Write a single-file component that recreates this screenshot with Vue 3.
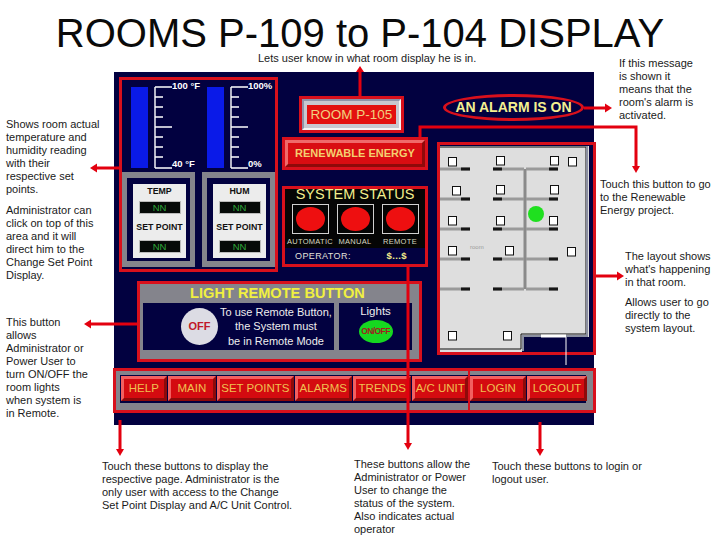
<template>
  <div class="page">
    <h1 class="title">ROOMS P-109 to P-104 DISPLAY</h1>

    <div class="panel">
      <section class="box gauges">
        <div class="meters">
          <div class="meter" v-for="m in meters" :key="m.name">
            <div class="bar"></div>
            <svg class="scale" width="24" height="83" viewBox="0 0 24 83">
              <path d="M1 1V82M1 1H18M1 82H18M1 11H9M1 21H9M1 31H9M1 41H18M1 51H9M1 61H9M1 71H9" stroke="#fff" stroke-width="1.4" fill="none" />
            </svg>
            <div class="marks">
              <span>{{ m.top }}</span>
              <span>{{ m.bottom }}</span>
            </div>
          </div>
        </div>
        <div class="readouts">
          <div class="readout" v-for="m in meters" :key="m.name">
            <div class="card">
              <span>{{ m.name }}</span>
              <b>NN</b>
              <span>SET POINT</span>
              <b>NN</b>
            </div>
          </div>
        </div>
      </section>

      <div class="middle">
        <div class="box room"><div class="room-face"><span>ROOM P-105</span></div></div>
        <div class="box renew"><div class="renew-face">RENEWABLE ENERGY</div></div>
        <section class="box status">
          <div class="status-top">
            <div class="status-title">SYSTEM STATUS</div>
            <div class="lamps">
              <div class="lamp" v-for="s in modes" :key="s">
                <div class="lamp-frame"><i></i></div>
                <span>{{ s }}</span>
              </div>
            </div>
          </div>
          <div class="operator"><span>OPERATOR:</span><b>$...$</b></div>
        </section>
      </div>

      <div class="side">
        <div class="alarm">AN ALARM IS ON</div>
        <div class="box plan">
          <svg width="153" height="222" viewBox="440 146 153 222">
            <path d="M439 147H589V338H522V353H439Z" fill="#dedede" />
            <path d="M439 148H586V335H521V350H439" fill="none" stroke="#111" stroke-width="1" />
            <path d="M587 147V337H523V352" fill="none" stroke="#8b8fa0" stroke-width="2" />
            <path d="M541 337H566" stroke="#fff" stroke-width="3" />
            <path d="M566 338V366" stroke="#fff" stroke-width="1" />
            <path d="M525 170V290" stroke="#8a8a8a" stroke-width="3" />
            <g v-for="y in wallRows" :key="y">
              <path :d="`M440 ${y}H470M493 ${y}H524M526 ${y}H558`" stroke="#9a9a9a" stroke-width="3" />
              <path :d="`M461 ${y}H470M493 ${y}H502M549 ${y}H558`" stroke="#161616" stroke-width="3" />
            </g>
            <rect v-for="s in squares" :key="s.join()" :x="s[0] + 0.5" :y="s[1] + 0.5" width="8" height="8.5" fill="#fff" stroke="#111" />
            <circle cx="536" cy="215" r="8" fill="#1fe01f" />
            <text x="470" y="250" class="plan-label">room</text>
          </svg>
        </div>
      </div>

      <section class="box light">
        <div class="light-title">LIGHT REMOTE BUTTON</div>
        <div class="light-row">
          <div class="light-msg">
            <div class="off-button">OFF</div>
            <p>To use Remote Button,<br />the System must<br />be in Remote Mode</p>
          </div>
          <div class="light-state">
            <span>Lights</span>
            <div class="on-off">ON/OFF</div>
          </div>
        </div>
      </section>

      <nav class="nav">
        <div class="box nav-group">
          <button v-for="b in mainButtons" :key="b.label" :style="{ width: b.w + 'px' }">{{ b.label }}</button>
        </div>
        <div class="box nav-group login">
          <button v-for="b in userButtons" :key="b.label" :style="{ width: b.w + 'px' }">{{ b.label }}</button>
        </div>
      </nav>
    </div>

    <svg class="arrows" width="720" height="540" viewBox="0 0 720 540">
      <g fill="none" stroke="#e3000f" stroke-width="3">
        <path d="M360 96V70" />
        <path d="M584 108H606" />
        <path d="M420 137V127H636V168" />
        <path d="M408 267V444" />
        <path d="M119 168H95" />
        <path d="M137 324H89" />
        <path d="M120 420V449" />
        <path d="M540 422V449" />
        <path d="M596 276H618" />
      </g>
      <g fill="#e3000f">
        <path d="M360 66L356 72H364Z" />
        <path d="M612 108L605 103.5V112.5Z" />
        <path d="M636 173L632 166H640Z" />
        <path d="M408 450L404 443H412Z" />
        <path d="M90 168L97 163.5V172.5Z" />
        <path d="M84 324L91 319.5V328.5Z" />
        <path d="M120 456L116 449H124Z" />
        <path d="M540 456L536 449H544Z" />
        <path d="M624 276L617 271.5V280.5Z" />
      </g>
    </svg>

    <p
      v-for="n in notes"
      :key="n.text"
      class="note"
      :style="{ left: n.x + 'px', top: n.y + 'px' }"
      v-html="n.text"
    ></p>
  </div>
</template>

<script setup>
const meters = [
  { name: "TEMP", top: "100 °F", bottom: "40 °F" },
  { name: "HUM", top: "100%", bottom: "0%" },
]

const modes = ["AUTOMATIC", "MANUAL", "REMOTE"]

const wallRows = [170, 200, 230, 260, 290]

const squares = [
  [448, 158], [496, 157], [550, 157], [568, 158],
  [452, 187], [496, 186], [550, 186],
  [448, 217], [496, 217], [549, 217],
  [448, 247], [505, 247], [567, 248],
  [448, 332], [503, 332],
]

const mainButtons = [
  { label: "HELP", w: 46 },
  { label: "MAIN", w: 49 },
  { label: "SET POINTS", w: 77 },
  { label: "ALARMS", w: 58 },
  { label: "TRENDS", w: 59 },
  { label: "A/C UNIT", w: 56 },
]

const userButtons = [
  { label: "LOGIN", w: 56 },
  { label: "LOGOUT", w: 60 },
]

const notes = [
  { x: 258, y: 52, text: "Lets user know in what room display he is in." },
  { x: 619, y: 57, text: "If this message<br>is shown it<br>means that the<br>room's alarm is<br>activated." },
  { x: 600, y: 178, text: "Touch this button to go<br>to the Renewable<br>Energy project." },
  { x: 625, y: 250, text: "The layout shows<br>what's happening<br>in that room." },
  { x: 625, y: 296, text: "Allows user to go<br>directly to the<br>system layout." },
  { x: 6, y: 118, text: "Shows room actual<br>temperature and<br>humidity reading<br>with their<br>respective set<br>points." },
  { x: 6, y: 204, text: "Administrator can<br>click on top of this<br>area and it will<br>direct him to the<br>Change Set Point<br>Display." },
  { x: 6, y: 316, text: "This button<br>allows<br>Administrator or<br>Power User to<br>turn ON/OFF the<br>room lights<br>when system is<br>in Remote." },
  { x: 102, y: 460, text: "Touch these buttons to display the<br>respective page. Administrator is the<br>only user with access to the Change<br>Set Point Display and A/C Unit Control." },
  { x: 354, y: 458, text: "These buttons allow the<br>Administrator or Power<br>User to change the<br>status of the system.<br>Also indicates actual<br>operator" },
  { x: 492, y: 460, text: "Touch these buttons to login or<br>logout user." },
]
</script>

<style>
html,
body {
  margin: 0;
  background: #fff;
}
</style>

<style scoped>
.page {
  position: relative;
  width: 720px;
  height: 540px;
  overflow: hidden;
  font-family: "Liberation Sans", Arial, sans-serif;
  color: #111;
}
.title {
  margin: 0;
  padding-top: 15px;
  height: 52px;
  box-sizing: border-box;
  text-align: center;
  font-size: 40px;
  line-height: 37px;
  font-weight: 400;
  color: #0a0a0a;
}
.panel {
  position: absolute;
  left: 114px;
  top: 72px;
  width: 480px;
  height: 353px;
  box-sizing: border-box;
  background: #020140;
  padding: 5px 0 0 5px;
  display: grid;
  grid-template-columns: 163px 155px 159px;
  grid-template-rows: 195px 81px 45px;
}
.box {
  box-sizing: border-box;
  border: 3px solid #d8101c;
}

/* temperature and humidity */
.gauges {
  width: 159px;
  height: 195px;
  display: flex;
  flex-direction: column;
}
.meters {
  display: flex;
  height: 92px;
}
.meter {
  width: 76px;
  display: flex;
  padding: 7px 0 0 9px;
  box-sizing: border-box;
  position: relative;
}
.bar {
  width: 17px;
  height: 81px;
  background: #0a1ae8;
  margin-right: 6px;
}
.scale {
  margin-top: -1px;
  flex: none;
}
.marks {
  position: absolute;
  left: 50px;
  top: 0;
  height: 89px;
  display: flex;
  flex-direction: column;
  justify-content: space-between;
  color: #fff;
  font-size: 9.5px;
  line-height: 11px;
  font-weight: 700;
  white-space: nowrap;
}
.readouts {
  display: flex;
  gap: 7px;
}
.readout {
  width: 73px;
  height: 95px;
  background: #84848c;
  box-sizing: border-box;
  padding: 6px 5px;
}
.card {
  height: 83px;
  background: #020140;
  padding: 6px 4px 3px 6px;
  box-sizing: border-box;
  display: flex;
  flex-direction: column;
  align-items: center;
  font-size: 8.8px;
  color: #111;
  font-weight: 700;
  position: relative;
}
.card::before {
  content: "";
  position: absolute;
  inset: 6px 4px 3px 6px;
  background: #ececec;
}
.card span {
  position: relative;
  height: 15px;
  line-height: 15px;
  white-space: nowrap;
}
.card span:nth-of-type(2) {
  height: 24px;
  line-height: 27px;
}
.card b {
  position: relative;
  width: 42px;
  height: 13px;
  background: #060a08;
  border: 1px solid #bbb;
  box-sizing: border-box;
  color: #2fa83a;
  text-align: center;
  font-weight: 400;
  font-size: 9.5px;
  line-height: 11px;
  margin-top: 2px;
}

/* middle column */
.middle {
  display: flex;
  flex-direction: column;
  align-items: flex-start;
}
.room {
  width: 105px;
  height: 37px;
  margin: 19px 0 4px 17px;
}
.room-face {
  height: 100%;
  box-sizing: border-box;
  background: #c8c8d0;
  border: 2px solid #e8e8e8;
  border-color: #8f93a8 #f4f4f4 #f4f4f4 #8f93a8;
  padding: 4px 3px;
}
.room-face span {
  display: block;
  height: 100%;
  background: #e3100f;
  color: #f0d080;
  font-size: 13.5px;
  line-height: 19px;
  text-align: center;
  white-space: nowrap;
}
.renew {
  width: 146px;
  height: 33px;
  margin-bottom: 16px;
}
.renew-face {
  height: 100%;
  box-sizing: border-box;
  background: #d90d12;
  border: 3px solid;
  border-color: #f06a6a #8e0a0a #8e0a0a #f06a6a;
  color: #f4d070;
  font-size: 11px;
  font-weight: 700;
  line-height: 21px;
  text-align: center;
  white-space: nowrap;
}
.status {
  width: 146px;
  height: 81px;
  display: flex;
  flex-direction: column;
  background: #020140;
}
.status-top {
  height: 59px;
  background: #050505;
  display: flex;
  flex-direction: column;
  align-items: center;
}
.status-title {
  color: #f2ee8c;
  font-size: 14.5px;
  line-height: 10px;
  height: 15px;
  white-space: nowrap;
}
.lamps {
  display: flex;
  gap: 7px;
}
.lamp {
  width: 38px;
  display: flex;
  flex-direction: column;
  align-items: center;
  color: #d8d8c0;
  font-size: 7.5px;
  line-height: 10px;
  letter-spacing: 0.3px;
  white-space: nowrap;
}
.lamp span {
  margin-top: 3px;
}
.lamp-frame {
  width: 37px;
  height: 30px;
  box-sizing: border-box;
  border: 1px solid #d0d0d0;
  display: flex;
  align-items: center;
  justify-content: center;
}
.lamp-frame i {
  width: 29px;
  height: 24px;
  border-radius: 50%;
  background: #ee0f10;
}
.operator {
  display: flex;
  justify-content: space-between;
  padding: 0 18px 0 10px;
  color: #e0e0d8;
  font-size: 9px;
  line-height: 16px;
  letter-spacing: 0.4px;
}
.operator b {
  color: #f2ee8c;
  font-size: 9.5px;
}

/* right column */
.side {
  grid-column: 3;
  grid-row: 1 / 3;
  display: flex;
  flex-direction: column;
  align-items: flex-start;
}
.alarm {
  width: 141px;
  height: 28px;
  box-sizing: border-box;
  margin: 17px 0 21px 6px;
  border: 3.5px solid #d8101c;
  border-radius: 50%;
  color: #f4f090;
  font-size: 14px;
  font-weight: 700;
  line-height: 21px;
  text-align: center;
  white-space: nowrap;
}
.plan {
  width: 159px;
  height: 213px;
  overflow: visible;
}
.plan svg {
  display: block;
  position: relative;
  z-index: 1;
}
.plan-label {
  font-size: 6px;
  fill: #9a9a9a;
}

/* light remote */
.light {
  grid-column: 1 / 3;
  grid-row: 2;
  width: 285px;
  height: 81px;
  margin: 9px 0 0 18px;
  background: #84848c;
  padding: 0 7px 0 3px;
}
.light-title {
  height: 19px;
  color: #f0f040;
  font-size: 14.6px;
  font-weight: 700;
  line-height: 19px;
  text-align: center;
  white-space: nowrap;
}
.light-row {
  display: flex;
  gap: 5px;
}
.light-msg,
.light-state {
  height: 47px;
  background: #020140;
  color: #eee;
}
.light-msg {
  width: 191px;
  box-sizing: border-box;
  padding-left: 38px;
  display: flex;
  align-items: center;
  gap: 2px;
}
.off-button {
  flex: none;
  width: 37px;
  height: 37px;
  border-radius: 50%;
  background: #dcdce4;
  color: #c01828;
  font-size: 11px;
  font-weight: 700;
  line-height: 37px;
  text-align: center;
}
.light-msg p {
  margin: 0;
  font-size: 11px;
  line-height: 14.5px;
  text-align: center;
  white-space: nowrap;
}
.light-state {
  width: 73px;
  display: flex;
  flex-direction: column;
  align-items: center;
  font-size: 11.5px;
  line-height: 16px;
}
.on-off {
  width: 34px;
  height: 23px;
  margin-top: 1px;
  border-radius: 50%;
  background: #16d820;
  color: #a02020;
  font-size: 8.5px;
  font-weight: 700;
  letter-spacing: -0.6px;
  line-height: 23px;
  text-align: center;
  white-space: nowrap;
}

/* bottom buttons */
.nav {
  grid-column: 1 / 4;
  grid-row: 3;
  display: flex;
  width: 483px;
  height: 45px;
  margin: 15px 0 0 -6px;
}
.nav-group {
  height: 45px;
  width: 355px;
  display: flex;
  gap: 1px;
  background: #020140;
  padding: 5px 0 0 5px;
  border-right: 0;
  box-shadow: inset 0 -7px 0 #84848c, inset 4px 0 0 #84848c, inset 0 4px 0 #84848c;
}
.login {
  width: 128px;
  padding-left: 0;
  border-left-width: 2px;
  border-right: 3px solid #d8101c;
  box-shadow: inset 0 -7px 0 #84848c, inset -7px 0 0 #84848c, inset 0 4px 0 #84848c;
}
.nav-group button {
  height: 25px;
  box-sizing: border-box;
  padding: 0;
  background: #d40b10;
  border: 3px solid;
  border-color: #f26060 #8e0a0a #8e0a0a #f26060;
  color: #f0c050;
  font-family: inherit;
  font-size: 11.5px;
  white-space: nowrap;
  line-height: 17px;
}

.arrows {
  position: absolute;
  left: 0;
  top: 0;
  z-index: 2;
  pointer-events: none;
}
.note {
  position: absolute;
  margin: 0;
  font-size: 11px;
  line-height: 13px;
  color: #1a1a1a;
  white-space: nowrap;
  z-index: 3;
}
</style>
